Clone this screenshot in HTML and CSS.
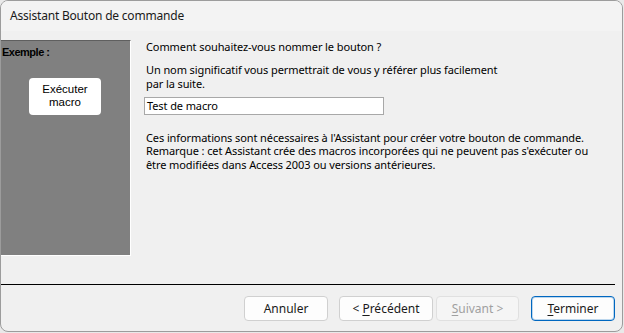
FILE: index.html
```html
<!DOCTYPE html>
<html lang="fr">
<head>
<meta charset="utf-8">
<title>Assistant Bouton de commande</title>
<link rel="stylesheet" href="styles.css">
</head>
<body>
<div class="window">
  <div class="titlebar">Assistant Bouton de commande</div>
  <div class="main">
    <div class="sample">
      <div class="sample-label">Exemple :</div>
      <div class="sample-btn"><span class="line">Exécuter</span><span class="line">macro</span></div>
    </div>
    <div class="content">
      <p class="q">Comment souhaitez-vous nommer le bouton ?</p>
      <p class="hint">Un nom significatif vous permettrait de vous y référer plus facilement<br>par la suite.</p>
      <div class="field">Test de macro</div>
      <p class="info">Ces informations sont nécessaires à l'Assistant pour créer votre bouton de commande.<br>Remarque : cet Assistant crée des macros incorporées qui ne peuvent pas s'exécuter ou<br>être modifiées dans Access 2003 ou versions antérieures.</p>
    </div>
  </div>
  <div class="divider"></div>
  <div class="footer">
    <div class="btn btn-cancel">Annuler</div>
    <div class="btn btn-prev">&lt; <u>P</u>récédent</div>
    <div class="btn btn-next disabled"><u>S</u>uivant &gt;</div>
    <div class="btn btn-finish default"><u>T</u>erminer</div>
  </div>
</div>
</body>
</html>
```
FILE: styles.css
```css
html, body {
  margin: 0;
  padding: 0;
  background: #e9e9e9;
}
body {
  width: 624px;
  height: 333px;
  overflow: hidden;
  font-family: "Noto Sans", "Open Sans", sans-serif;
  color: #000;
}
.window {
  box-sizing: border-box;
  width: 623px;
  height: 332px;
  border: 1px solid #9c9c9c;
  border-radius: 8px;
  background: #f0f0f0;
  overflow: hidden;
  display: flex;
  flex-direction: column;
}
.titlebar {
  height: 30px;
  flex: none;
  background: #f3f3f3;
  font-size: 12px;
  line-height: 30px;
  padding-left: 9px;
  color: #1a1a1a;
  letter-spacing: -0.2px;
}
.main {
  margin-top: 9px;
  height: 216px;
  display: flex;
  flex: none;
}
.sample {
  box-sizing: border-box;
  width: 130px;
  height: 216px;
  background: #808080;
  border-top: 1px solid #5f5f5f;
  border-right: 1px solid #ffffff;
  border-bottom: 1px solid #ffffff;
  padding-top: 5px;
  padding-left: 1px;
}
.sample-label {
  font-family: "Liberation Sans", Arial, sans-serif;
  font-weight: bold;
  font-size: 11px;
  line-height: 13px;
  letter-spacing: -0.5px;
  color: #000;
}
.sample-btn {
  width: 72px;
  height: 37px;
  margin-top: 19px;
  margin-left: 27px;
  background: #fff;
  border-radius: 4px;
  font-family: "Liberation Sans", Arial, sans-serif;
  font-size: 11.5px;
  text-align: center;
  box-sizing: border-box;
  padding-top: 5px;
  color: #000;
  display: flex;
  flex-direction: column;
  align-items: center;
}
.sample-btn .line {
  display: block;
  line-height: 13px;
}
.content {
  padding-left: 15px;
  font-size: 11px;
  line-height: 13.5px;
  letter-spacing: -0.1px;
  color: #000;
}
.content p {
  margin: 0;
}
.hint {
  margin-top: 9.5px !important;
}
.field {
  box-sizing: border-box;
  width: 240px;
  height: 18px;
  margin-top: 6.5px;
  margin-left: -2px;
  border: 1px solid #a8a8a8;
  background: #fff;
  padding-left: 2px;
  line-height: 16px;
}
.info {
  margin-top: 16px !important;
}
.divider {
  margin-top: 28px;
  width: 614px;
  height: 1px;
  background: #000;
  flex: none;
}
.footer {
  margin-top: 11px;
  display: flex;
  padding-left: 243px;
}
.btn {
  box-sizing: border-box;
  height: 25px;
  border: 1px solid #d0d0d0;
  border-radius: 4px;
  background: #fdfdfd;
  font-size: 12px;
  line-height: 23px;
  text-align: center;
  color: #1a1a1a;
}
.btn u {
  text-underline-offset: 2px;
}
.btn-cancel { width: 84px; }
.btn-prev { width: 94px; margin-left: 11px; }
.btn-next { width: 83px; margin-left: 3px; }
.btn-finish { width: 84px; margin-left: 12px; }
.disabled {
  background: #f5f5f5;
  border-color: #e0e0e0;
  color: #a0a0a0;
}
.default {
  border-color: #0067c0;
  box-shadow: inset 0 0 0 1px rgba(0, 103, 192, 0.25);
}
```
